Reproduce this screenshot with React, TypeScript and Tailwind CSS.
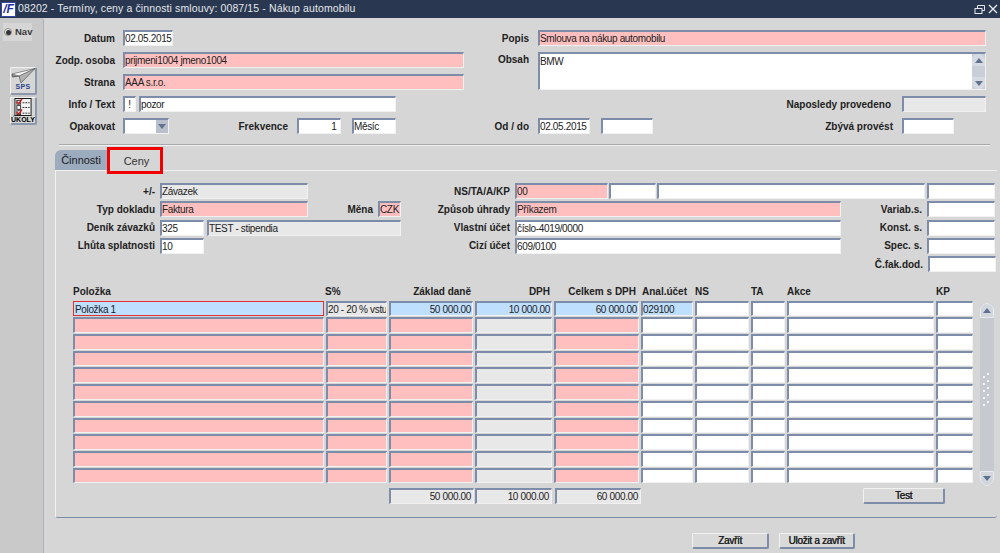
import type { ReactNode } from "react"

const font = "font-['Liberation_Sans',Arial,sans-serif]"
const edge = "border-t-2 border-l-2 border-r border-b border-t-[#7d8ca8] border-l-[#7d8ca8] border-r-[#f1f1f1] border-b-[#f1f1f1]"

const tones = {
    white: "bg-white",
    pink: "bg-[#ffbfbf]",
    gray: "bg-[#e8e8e8]",
    blue: "bg-[#bfdfff]",
}

type Tone = keyof typeof tones

function Field({ className = "", tone = "white", right = false, active = false, children }: { className?: string; tone?: Tone; right?: boolean; active?: boolean; children?: ReactNode }) {
    return (
        <div className={`${active ? "border border-[#e03030] pl-[1px]" : edge} ${tones[tone]} ${right ? "justify-end" : ""} flex h-4 shrink-0 items-center overflow-hidden pr-[1px] text-[10px] tracking-[-0.35px] whitespace-nowrap text-[#222] ${className}`}>
            {children}
        </div>
    )
}

function Label({ className = "", children }: { className?: string; children: ReactNode }) {
    return <div className={`shrink-0 text-right text-[10px] font-bold whitespace-nowrap text-[#222] ${className}`}>{children}</div>
}

function Button({ className = "", children }: { className?: string; children: ReactNode }) {
    return (
        <div className={`flex h-4 shrink-0 items-center justify-center rounded-[2px] border-t border-l border-r-2 border-b-2 border-t-[#f1f1f1] border-l-[#f1f1f1] border-r-[#7d8ca8] border-b-[#7d8ca8] bg-[#d9d9d9] text-[10px] tracking-[-0.3px] text-[#222] [text-shadow:0.4px_0_0_#222] ${className}`}>
            {children}
        </div>
    )
}

function Arrow({ up = false }: { up?: boolean }) {
    return (
        <svg width="8" height="5" viewBox="0 0 8 5">
            <path d={up ? "M0 5 L4 0 L8 5 Z" : "M0 0 L4 5 L8 0 Z"} fill="#5f7391" />
        </svg>
    )
}

function Grip() {
    return (
        <svg width="10" height="36" viewBox="0 0 10 36">
            {[0, 7, 14, 21, 28].map((y) => (
                <g key={y} fill="#f4f4f4">
                    <rect x="1" y={y + 4} width="2" height="2" />
                    <rect x="5" y={y + 1} width="2" height="2" />
                </g>
            ))}
        </svg>
    )
}

function PlaneIcon() {
    return (
        <svg width="25" height="15" viewBox="0 0 25 15">
            <path d="M1 6 L24 0.5 L11 9 Z" fill="#f6f6f6" stroke="#666" strokeWidth="0.7" />
            <path d="M8 8 L10 15 L24 0.5 Z" fill="#b2b2b2" stroke="#555" strokeWidth="0.7" />
            <path d="M1 6 L1.5 9 L8 8" fill="#8a8a8a" stroke="#444" strokeWidth="0.7" />
        </svg>
    )
}

function TaskIcon() {
    return (
        <svg width="18" height="19" viewBox="0 0 18 19">
            <rect x="0.5" y="0.5" width="17" height="18" fill="#f4f4f4" stroke="#111" />
            <rect x="2.5" y="2.5" width="4" height="4" fill="#fff" stroke="#333" />
            <rect x="2.5" y="8" width="4" height="4" fill="#fff" stroke="#333" />
            <rect x="2.5" y="13.5" width="4" height="4" fill="#fff" stroke="#333" />
            <path d="M2.5 4 L4.5 6 L8 1 M2.5 15 L4.5 17 L8 12" fill="none" stroke="#d01818" strokeWidth="1.5" />
            <path d="M8.5 5 H16 M8.5 10 H16 M8.5 16 H16" stroke="#222" strokeWidth="1" strokeDasharray="2 1" />
        </svg>
    )
}

function Sidebar() {
    return (
        <div className="flex w-11 shrink-0 flex-col rounded-tr-[3px] border-r border-[#aab0ba] bg-[#c9c9c9] pt-[5px]">
            <div className="ml-[3px] flex h-[18px] w-[29px] items-center gap-[3px] bg-[#d6d6d6] pl-[1px] text-[9.5px] font-bold text-[#3a3a3a]">
                <div className="flex size-2 shrink-0 items-center justify-center rounded-full border border-[#888] bg-[#eee]">
                    <div className="size-[5px] rounded-full bg-[#333]" />
                </div>
                Nav
            </div>
            <div className="mt-[26px] ml-[10px] flex h-[28px] w-[27px] flex-col items-center rounded-[2px] border-t border-l border-r-2 border-b-2 border-t-[#f1f1f1] border-l-[#f1f1f1] border-r-[#8a97ad] border-b-[#8a97ad] bg-[#d6d6d6]">
                <PlaneIcon />
                <span className="text-[7px] leading-[8px] font-bold tracking-[0.3px] text-[#2b3f8c]">SPS</span>
            </div>
            <div className="mt-[2px] ml-[10px] flex h-[28px] w-[27px] flex-col items-center rounded-[2px] border-t border-l border-r-2 border-b-2 border-t-[#f1f1f1] border-l-[#f1f1f1] border-r-[#8a97ad] border-b-[#8a97ad] bg-[#d6d6d6]">
                <TaskIcon />
                <span className="text-[7px] leading-[7px] font-bold text-black">ÚKOLY</span>
            </div>
        </div>
    )
}

function TopForm() {
    return (
        <div className="flex pt-3">
            <div className="flex w-[426px] shrink-0 flex-col gap-[6px]">
                <div className="flex items-center">
                    <Label className="w-[71px]">Datum</Label>
                    <Field className="ml-2 w-[50px]">02.05.2015</Field>
                </div>
                <div className="flex items-center">
                    <Label className="w-[71px]">Zodp. osoba</Label>
                    <Field className="ml-2 w-[341px]" tone="pink">prijmeni1004 jmeno1004</Field>
                </div>
                <div className="flex items-center">
                    <Label className="w-[71px]">Strana</Label>
                    <Field className="ml-2 w-[341px]" tone="pink">AAA s.r.o.</Field>
                </div>
                <div className="flex items-center">
                    <Label className="w-[71px]">Info / Text</Label>
                    <Field className="ml-2 w-[13px] justify-center">!</Field>
                    <Field className="ml-[3px] w-[257px]">pozor</Field>
                </div>
                <div className="flex items-center">
                    <Label className="w-[71px]">Opakovat</Label>
                    <Field className="ml-2 w-[46px] justify-end !pr-0">
                        <div className="flex h-full w-[12px] items-center justify-center bg-[#b9c0cc]">
                            <Arrow />
                        </div>
                    </Field>
                    <Label className="w-[119px]">Frekvence</Label>
                    <Field className="ml-[9px] w-[44px]" right>1&nbsp;</Field>
                    <Field className="ml-[11px] w-[44px]">Měsíc</Field>
                </div>
            </div>
            <div className="flex flex-1 flex-col gap-[6px] pr-[14px]">
                <div className="flex items-center">
                    <Label className="w-[59px]">Popis</Label>
                    <Field className="ml-[9px] flex-1" tone="pink">Smlouva na nákup automobilu</Field>
                </div>
                <div className="flex h-[38px] items-start">
                    <Label className="w-[59px]">Obsah</Label>
                    <Field className="ml-[9px] !h-[38px] flex-1 !items-start !pr-0">
                        <span className="flex-1">BMW</span>
                        <div className="flex h-full w-[13px] flex-col items-center justify-between bg-[#c9ced8]">
                            <div className="flex h-[12px] w-full items-center justify-center rounded-t-[6px] bg-[#d6dae2]"><Arrow up /></div>
                            <div className="flex h-[12px] w-full items-center justify-center rounded-b-[6px] bg-[#d6dae2]"><Arrow /></div>
                        </div>
                    </Field>
                </div>
                <div className="flex items-center justify-end">
                    <Label>Naposledy provedeno</Label>
                    <Field className="ml-[11px] w-[84px]" tone="gray" />
                </div>
                <div className="flex items-center">
                    <Label className="w-[59px]">Od / do</Label>
                    <Field className="ml-[9px] w-[52px]">02.05.2015</Field>
                    <Field className="ml-[11px] w-[52px]" />
                    <Label className="w-[240px]">Zbývá provést</Label>
                    <Field className="ml-[9px] w-[52px]" />
                </div>
            </div>
        </div>
    )
}

function Tabs() {
    return (
        <div className="relative z-10 ml-[11px] flex h-[23px] items-start">
            <div className="mt-[3px] flex h-5 w-[52px] items-center justify-center rounded-tl-[6px] bg-[#9dabbf] pt-[1px] text-[11px] text-[#1c1c1c]">
                Činnosti
            </div>
            <div className="flex h-[27px] w-[56px] items-center justify-center border-[3px] border-[#f00000] bg-[#d6d6d6] pt-[1px] pl-[3px] text-[11px] text-[#333]">
                Ceny
            </div>
        </div>
    )
}

function PanelForm() {
    return (
        <div className="flex flex-col gap-[2.25px]">
            <div className="flex items-center">
                <Label className="w-[99px]">+/-</Label>
                <Field className="ml-[5px] w-[148px]" tone="gray">Závazek</Field>
                <Label className="w-[202px]">NS/TA/A/KP</Label>
                <Field className="ml-[5px] w-[93px]" tone="pink">00</Field>
                <Field className="ml-[1px] w-[47px]" />
                <Field className="ml-[1px] w-[268px]" />
                <Field className="ml-[2px] w-[68px]" />
            </div>
            <div className="flex items-center">
                <Label className="w-[99px]">Typ dokladu</Label>
                <Field className="ml-[5px] w-[148px]" tone="pink">Faktura</Field>
                <Label className="w-[65px]">Měna</Label>
                <Field className="ml-[5px] w-[23px]" tone="pink">CZK</Field>
                <Label className="w-[109px]">Způsob úhrady</Label>
                <Field className="ml-[5px] w-[326px]" tone="pink">Příkazem</Field>
                <Label className="w-[81px]">Variab.s.</Label>
                <Field className="ml-[5px] w-[68px]" />
            </div>
            <div className="flex items-center">
                <Label className="w-[99px]">Deník závazků</Label>
                <Field className="ml-[5px] w-[44px]">325</Field>
                <Field className="ml-[3px] w-[194px]" tone="gray">TEST - stipendia</Field>
                <Label className="w-[109px]">Vlastní účet</Label>
                <Field className="ml-[5px] w-[326px]">číslo-4019/0000</Field>
                <Label className="w-[81px]">Konst. s.</Label>
                <Field className="ml-[5px] w-[68px]" />
            </div>
            <div className="flex items-center">
                <Label className="w-[99px]">Lhůta splatnosti</Label>
                <Field className="ml-[5px] w-[44px]">10</Field>
                <Label className="w-[306px]">Cizí účet</Label>
                <Field className="ml-[5px] w-[326px]">609/0100</Field>
                <Label className="w-[81px]">Spec. s.</Label>
                <Field className="ml-[5px] w-[68px]" />
            </div>
            <div className="flex items-center justify-end pr-[1px]">
                <Label>Č.fak.dod.</Label>
                <Field className="ml-[5px] w-[68px]" />
            </div>
        </div>
    )
}

const columns: { title: string; head: string; tone: Tone }[] = [
    { title: "Položka", head: "!text-left", tone: "pink" },
    { title: "S%", head: "!text-left -ml-[1px]", tone: "pink" },
    { title: "Základ daně", head: "pr-[2px]", tone: "pink" },
    { title: "DPH", head: "pr-[2px]", tone: "gray" },
    { title: "Celkem s DPH", head: "pr-[3px]", tone: "pink" },
    { title: "Anal.účet", head: "!text-left ml-[1px]", tone: "white" },
    { title: "NS", head: "!text-left", tone: "white" },
    { title: "TA", head: "!text-left", tone: "white" },
    { title: "Akce", head: "!text-left", tone: "white" },
    { title: "KP", head: "!text-left", tone: "white" },
]

const emptyRows = [1, 2, 3, 4, 5, 6, 7, 8, 9, 10]

function ItemTable() {
    return (
        <div className="mt-3 ml-[17px] flex">
            <div className="grid w-[900px] shrink-0 grid-cols-[251px_61px_84px_77px_85px_52px_54px_34px_147px_37px] auto-rows-[15.7px] gap-x-[2px] gap-y-[1px]">
                {columns.map((c) => (
                    <Label key={c.title} className={`!h-[16.7px] ${c.head}`}>{c.title}</Label>
                ))}
                <Field className="!h-full pt-[1px]" tone="blue" active>Položka 1</Field>
                <Field className="!h-full pt-[1px]" tone="gray">20 - 20 % vstup</Field>
                <Field className="!h-full pt-[1px]" tone="blue" right>50 000.00</Field>
                <Field className="!h-full pt-[1px]" tone="blue" right>10 000.00</Field>
                <Field className="!h-full pt-[1px]" tone="blue" right>60 000.00</Field>
                <Field className="!h-full pt-[1px]" tone="blue">029100</Field>
                <Field className="!h-full" />
                <Field className="!h-full" />
                <Field className="!h-full" />
                <Field className="!h-full" />
                {emptyRows.map((row) =>
                    columns.map((c) => <Field key={`${row}-${c.title}`} className="!h-full" tone={c.tone} />)
                )}
            </div>
            <div className="mt-[19px] ml-[7px] flex h-[183px] w-[14px] flex-col items-center rounded-[6px] bg-[#c6c9cf]">
                <div className="flex h-[15px] w-full items-center justify-center rounded-t-[7px] border border-[#e9ebef] bg-[#d2d6dd]"><Arrow up /></div>
                <div className="flex flex-1 items-center justify-center pb-[10px]"><Grip /></div>
                <div className="flex h-[15px] w-full items-center justify-center rounded-b-[7px] border border-[#e9ebef] bg-[#d2d6dd]"><Arrow /></div>
            </div>
        </div>
    )
}

function Totals() {
    return (
        <div className="mt-[2px] ml-[333px] flex">
            <Field className="w-[85px] pr-[2px]" tone="gray" right>50 000.00</Field>
            <Field className="ml-[1px] w-[77px] pr-[2px]" tone="gray" right>10 000.00</Field>
            <Field className="ml-[3px] w-[86px] pr-[2px]" tone="gray" right>60 000.00</Field>
            <Button className="ml-[222px] w-[82px]">Test</Button>
        </div>
    )
}

export default function App() {
    return (
        <div className={`${font} flex h-[553px] w-[1000px] flex-col overflow-hidden bg-[#d6d6d6]`}>
            <div className="flex h-[18px] shrink-0 items-center bg-[#293850] pr-[2px] pl-[1px]">
                <div className="flex h-[15px] w-[15px] items-center justify-center border border-[#3344aa] bg-white text-[12px] leading-none font-bold text-[#1f2ea8] italic">
                    /F
                </div>
                <span className="ml-[2px] flex-1 text-[10.5px] tracking-[0.12px] whitespace-nowrap text-[#e4e7ec]">
                    08202 - Termíny, ceny a činnosti smlouvy: 0087/15 - Nákup automobilu
                </span>
                <svg width="24" height="12" viewBox="0 0 24 12" fill="none" stroke="#e4e7ec" strokeWidth="1">
                    <path d="M3.5 5.5 V2.5 H10.5 V7.5 H8" />
                    <rect x="1" y="5.5" width="7" height="5" />
                    <path d="M15 2 L23 10 M23 2 L15 10" strokeWidth="1.4" />
                </svg>
            </div>
            <div className="flex min-h-0 flex-1">
                <Sidebar />
                <div className="flex flex-1 flex-col">
                    <TopForm />
                    <div className="mt-[10px] ml-[15px] h-[2px] w-[931px] border-t border-b border-t-[#a9a9a9] border-b-[#f1f1f1]" />
                    <div className="mt-[1px]">
                        <Tabs />
                    </div>
                    <div className="ml-[11px] h-[348px] w-[942px] rounded-b-[3px] border-t border-l border-b border-t-[#f1f1f1] border-l-[#f1f1f1] border-b-[#7d8ca8] pt-3">
                        <PanelForm />
                        <ItemTable />
                        <Totals />
                    </div>
                    <div className="mt-[15px] ml-[648px] flex gap-[10px]">
                        <Button className="w-[77px]">Zavřít</Button>
                        <Button className="w-[76px]">Uložit a zavřít</Button>
                    </div>
                </div>
            </div>
        </div>
    )
}
